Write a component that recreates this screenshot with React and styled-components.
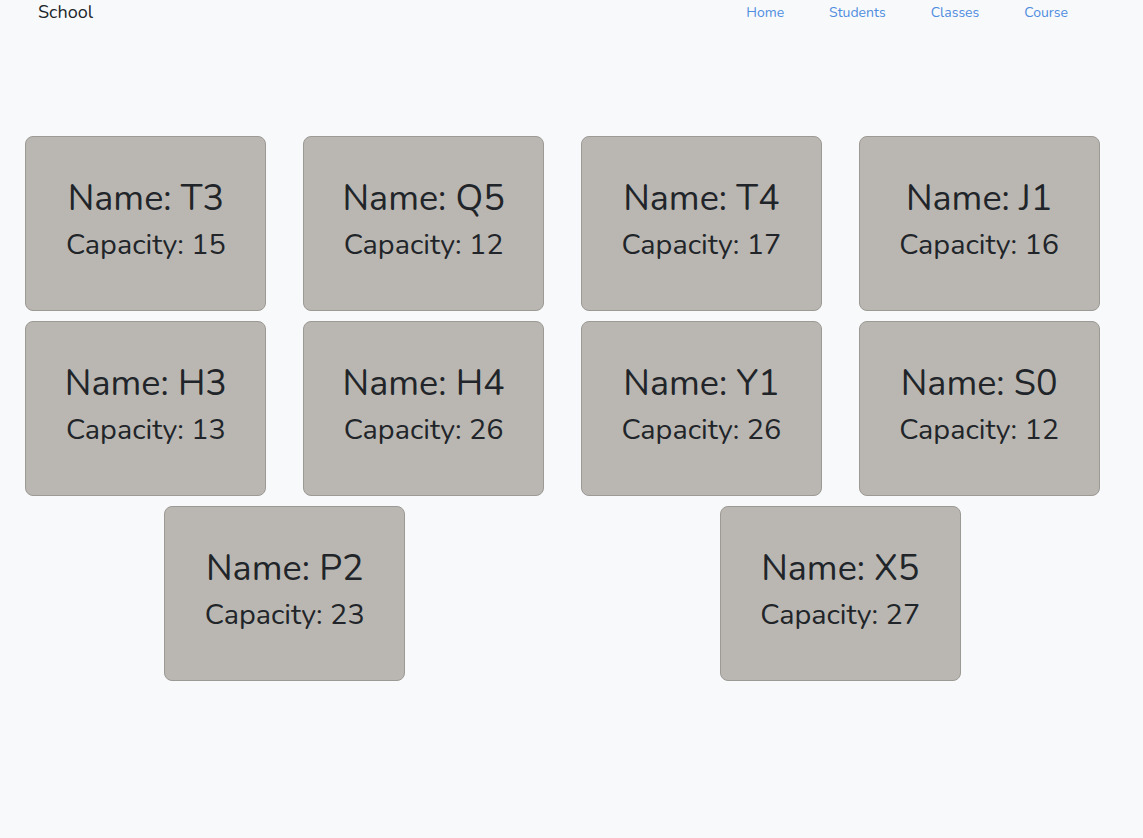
import React from 'react'
import styled, { createGlobalStyle } from 'styled-components'

const classes = [
  { name: 'T3', capacity: 15 },
  { name: 'Q5', capacity: 12 },
  { name: 'T4', capacity: 17 },
  { name: 'J1', capacity: 16 },
  { name: 'H3', capacity: 13 },
  { name: 'H4', capacity: 26 },
  { name: 'Y1', capacity: 26 },
  { name: 'S0', capacity: 12 },
  { name: 'P2', capacity: 23 },
  { name: 'X5', capacity: 27 },
]

const links = ['Home', 'Students', 'Classes', 'Course']

const GlobalStyle = createGlobalStyle`
  html, body {
    margin: 0;
    padding: 0;
    background: #f8f9fb;
    color: #212529;
    font-family: 'Nunito', 'Lato', 'Open Sans', sans-serif;
  }
`

const App = () => {
  return (
    <>
      <GlobalStyle />
      <Navbar>
        <Brand>School</Brand>
        <NavLinks>
          {links.map((link) => (
            <NavLink key={link} href='#'>
              {link}
            </NavLink>
          ))}
        </NavLinks>
      </Navbar>
      <Grid>
        {classes.map((c) => (
          <Card key={c.name}>
            <CardName>Name: {c.name}</CardName>
            <CardCapacity>Capacity: {c.capacity}</CardCapacity>
          </Card>
        ))}
      </Grid>
    </>
  )
}

const Navbar = styled.nav`
  display: flex;
  align-items: center;
  justify-content: space-between;
  height: 25px;
  padding: 0 75px 0 38px;
`
const Brand = styled.div`
  font-size: 18px;
  line-height: 25px;
`
const NavLinks = styled.div`
  display: flex;
  gap: 45px;
`
const NavLink = styled.a`
  font-size: 14px;
  color: #4f8ddf;
  text-decoration: none;
  line-height: 25px;
`
const Grid = styled.main`
  display: flex;
  flex-wrap: wrap;
  justify-content: space-around;
  row-gap: 10px;
  width: 1111px;
  margin: 111px 0 0 7px;
`
const Card = styled.div`
  display: flex;
  flex-direction: column;
  align-items: center;
  justify-content: center;
  box-sizing: border-box;
  width: 241px;
  height: 175px;
  padding-bottom: 7px;
  background: #bab7b2;
  border: 1px solid #9d9a95;
  border-radius: 8px;
`
const CardName = styled.div`
  font-size: 36px;
  line-height: 48px;
  margin-bottom: 2px;
`
const CardCapacity = styled.div`
  font-size: 28.8px;
  line-height: 40px;
`

export default App
